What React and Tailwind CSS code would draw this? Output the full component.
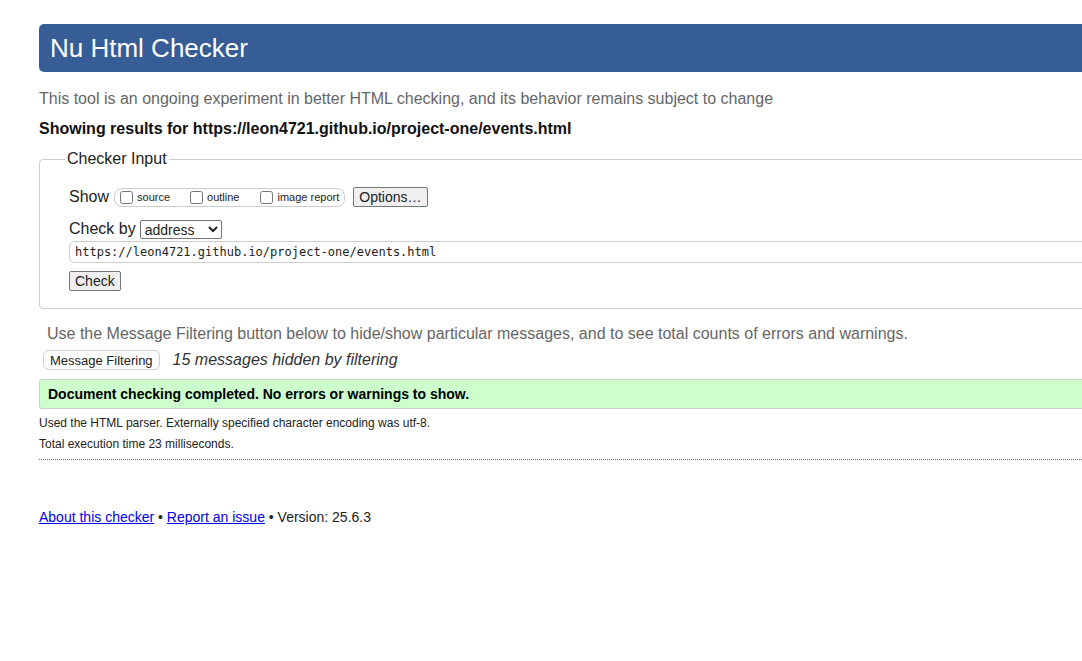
import React from 'react';

const sans = { fontFamily: '"Liberation Sans", Arial, sans-serif' };

function Box({ label }) {
  return (
    <label className="flex items-center">
      <input type="checkbox" className="m-0 ml-[5px] mr-[4px] h-[13px] w-[13px]" />
      <span className="text-[11px] leading-none">{label}</span>
    </label>
  );
}

export default function App() {
  return (
    <div className="w-full overflow-hidden bg-white text-[#222]" style={sans}>
      <div className="w-[1120px] pl-[39px] pt-[24px]">
        {/* Title bar */}
        <div className="h-[48px] flex items-center bg-[#365d95] rounded-[5px] pl-[11px]">
          <h1 className="text-[26px] text-white leading-none">Nu Html Checker</h1>
        </div>

        <p className="mt-[18px] text-[16px] leading-[18px] text-[#666]">
          This tool is an ongoing experiment in better HTML checking, and its behavior remains subject to change
        </p>
        <p className="mt-[12px] text-[16px] leading-[18px] font-bold text-[#111]">
          Showing results for https://leon4721.github.io/project-one/events.html
        </p>

        {/* Checker input */}
        <fieldset className="mt-[12px] border border-[#ccc] rounded-[4px] pl-[29px] pb-[15px]">
          <legend className="-ml-[4px] px-[2px] text-[16px] leading-[18px] text-[#222]">Checker Input</legend>

          <div className="mt-[19px] flex items-center h-[20px]">
            <span className="text-[16px] mr-[5px]">Show</span>
            <div className="flex items-center h-[19px] border border-[#ccc] rounded-[8px] pr-[5px]">
              <Box label="source" />
              <span className="w-[15px]" />
              <Box label="outline" />
              <span className="w-[16px]" />
              <Box label="image report" />
            </div>
            <button className="ml-[8px] h-[20px] px-[5px] text-[14px] leading-none bg-[#efefef] border border-[#767676] rounded-[2px]">
              Options…
            </button>
          </div>

          <div className="mt-[12px] flex items-center h-[20px]">
            <span className="text-[16px] mr-[4px]">Check by</span>
            <select className="h-[19px] w-[82px] text-[14px] leading-none border border-[#767676] rounded-[2px] bg-white">
              <option>address</option>
            </select>
          </div>

          <div className="mt-[2px] h-[22px] flex items-center border border-[#ccc] rounded-[5px] pl-[5px] text-[12px]" style={{ fontFamily: '"DejaVu Sans Mono", "Liberation Mono", monospace' }}>
            https://leon4721.github.io/project-one/events.html
          </div>

          <button className="mt-[8px] h-[20px] px-[5px] text-[14px] leading-none bg-[#efefef] border border-[#767676] rounded-[2px]">
            Check
          </button>
        </fieldset>

        <p className="mt-[16px] ml-[8px] text-[16px] leading-[18px] text-[#666]">
          Use the Message Filtering button below to hide/show particular messages, and to see total counts of errors and warnings.
        </p>

        <div className="mt-[5px] ml-[4px] flex items-center">
          <button className="h-[20px] px-[6px] text-[13px] leading-none bg-white border border-[#ccc] rounded-[6px]">
            Message Filtering
          </button>
          <span className="ml-[13px] text-[16px] italic text-[#333]">15 messages hidden by filtering</span>
        </div>

        <div className="mt-[7px] h-[30px] flex items-center bg-[#ccffcc] border border-[#ccc] rounded-[3px] pl-[8px]">
          <span className="text-[14px] font-bold text-black">Document checking completed. No errors or warnings to show.</span>
        </div>

        <p className="mt-[7px] text-[12px] leading-[14px]">Used the HTML parser. Externally specified character encoding was utf-8.</p>
        <p className="mt-[7px] text-[12px] leading-[14px]">Total execution time 23 milliseconds.</p>

        <div className="mt-[8px] border-t border-dotted border-[#666]" />

        <p className="mt-[49px] text-[14px] leading-[16px] text-[#222]">
          <a href="#" className="text-[#0000ee] underline">About this checker</a>
          {' • '}
          <a href="#" className="text-[#0000ee] underline">Report an issue</a>
          {' • Version: 25.6.3'}
        </p>
        <div className="h-[135px]" />
      </div>
    </div>
  );
}
